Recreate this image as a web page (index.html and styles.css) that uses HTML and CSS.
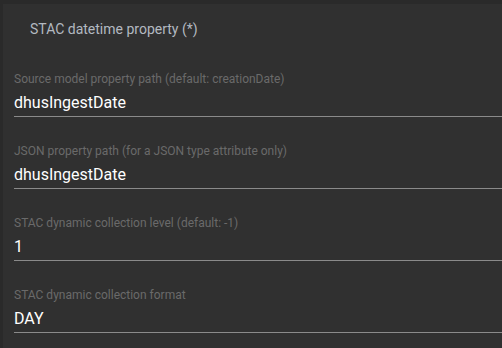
FILE: index.html
```html
<!DOCTYPE html>
<html>
<head>
<meta charset="utf-8">
<link rel="stylesheet" href="styles.css">
</head>
<body>
<div class="panel">
  <div class="heading">STAC datetime property (*)</div>
  <div class="field">
    <div class="label">Source model property path (default: creationDate)</div>
    <div class="value">dhusIngestDate</div>
  </div>
  <div class="field">
    <div class="label">JSON property path (for a JSON type attribute only)</div>
    <div class="value">dhusIngestDate</div>
  </div>
  <div class="field">
    <div class="label">STAC dynamic collection level (default: -1)</div>
    <div class="value">1</div>
  </div>
  <div class="field">
    <div class="label">STAC dynamic collection format</div>
    <div class="value">DAY</div>
  </div>
</div>
</body>
</html>
```
FILE: styles.css
```css
html, body {
  margin: 0;
  padding: 0;
  width: 502px;
  height: 348px;
  overflow: hidden;
  background: #2a2a2a;
  font-family: Roboto, "Liberation Sans", sans-serif;
}
.panel {
  margin: 4px 0 0 3px;
  height: 344px;
  background: #303030;
  padding-top: 15px;
  box-sizing: border-box;
}
.heading {
  font-size: 14px;
  line-height: 20px;
  color: #b3b9c0;
  padding-left: 27px;
  margin-bottom: 32px;
}
.field {
  margin-left: 11px;
  margin-bottom: 26px;
  border-bottom: 1px solid #8a8a8a;
}
.label {
  font-size: 12px;
  line-height: 16px;
  color: #6a6a6a;
  margin-bottom: 6px;
}
.value {
  font-size: 16px;
  line-height: 20px;
  color: #ffffff;
  padding-bottom: 3px;
}
```
